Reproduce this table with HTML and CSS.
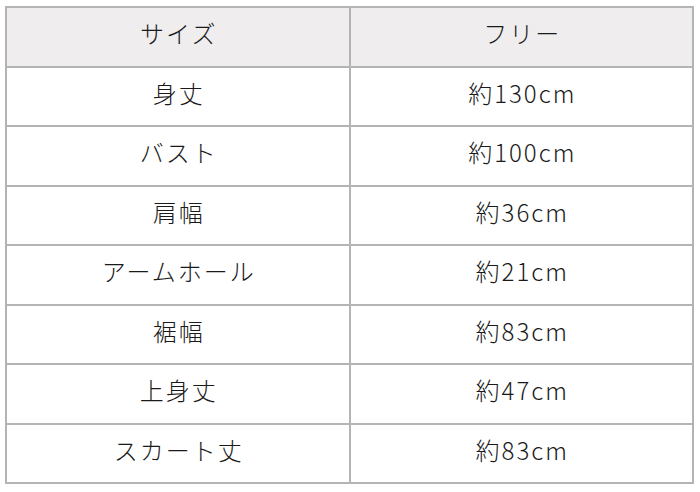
FILE: index.html
```html
<!DOCTYPE html>
<html lang="ja">
<head>
<meta charset="utf-8">
<link rel="stylesheet" href="styles.css">
</head>
<body>
<table class="size-table">
  <tr class="head"><td>サイズ</td><td>フリー</td></tr>
  <tr><td>身丈</td><td>約130cm</td></tr>
  <tr><td>バスト</td><td>約100cm</td></tr>
  <tr><td>肩幅</td><td>約36cm</td></tr>
  <tr><td>アームホール</td><td>約21cm</td></tr>
  <tr><td>裾幅</td><td>約83cm</td></tr>
  <tr><td>上身丈</td><td>約47cm</td></tr>
  <tr><td>スカート丈</td><td>約83cm</td></tr>
</table>
</body>
</html>
```
FILE: styles.css
```css
html, body {
  margin: 0;
  padding: 0;
  background: #ffffff;
}
body {
  padding: 6px 0 0 5px;
  font-family: "Noto Sans CJK JP", "Noto Sans", sans-serif;
  color: #1a1a1a;
}
.size-table {
  border-collapse: collapse;
  width: 689px;
  table-layout: fixed;
}
.size-table td {
  border: 2px solid #b4b4b4;
  height: 50.5px;
  padding: 0 0 7px 2px;
  text-align: center;
  vertical-align: middle;
  font-size: 24px;
  font-weight: 300;
  letter-spacing: 2px;
  line-height: 1;
  width: 50%;
}
.size-table .head td {
  background: #efeded;
}
```
